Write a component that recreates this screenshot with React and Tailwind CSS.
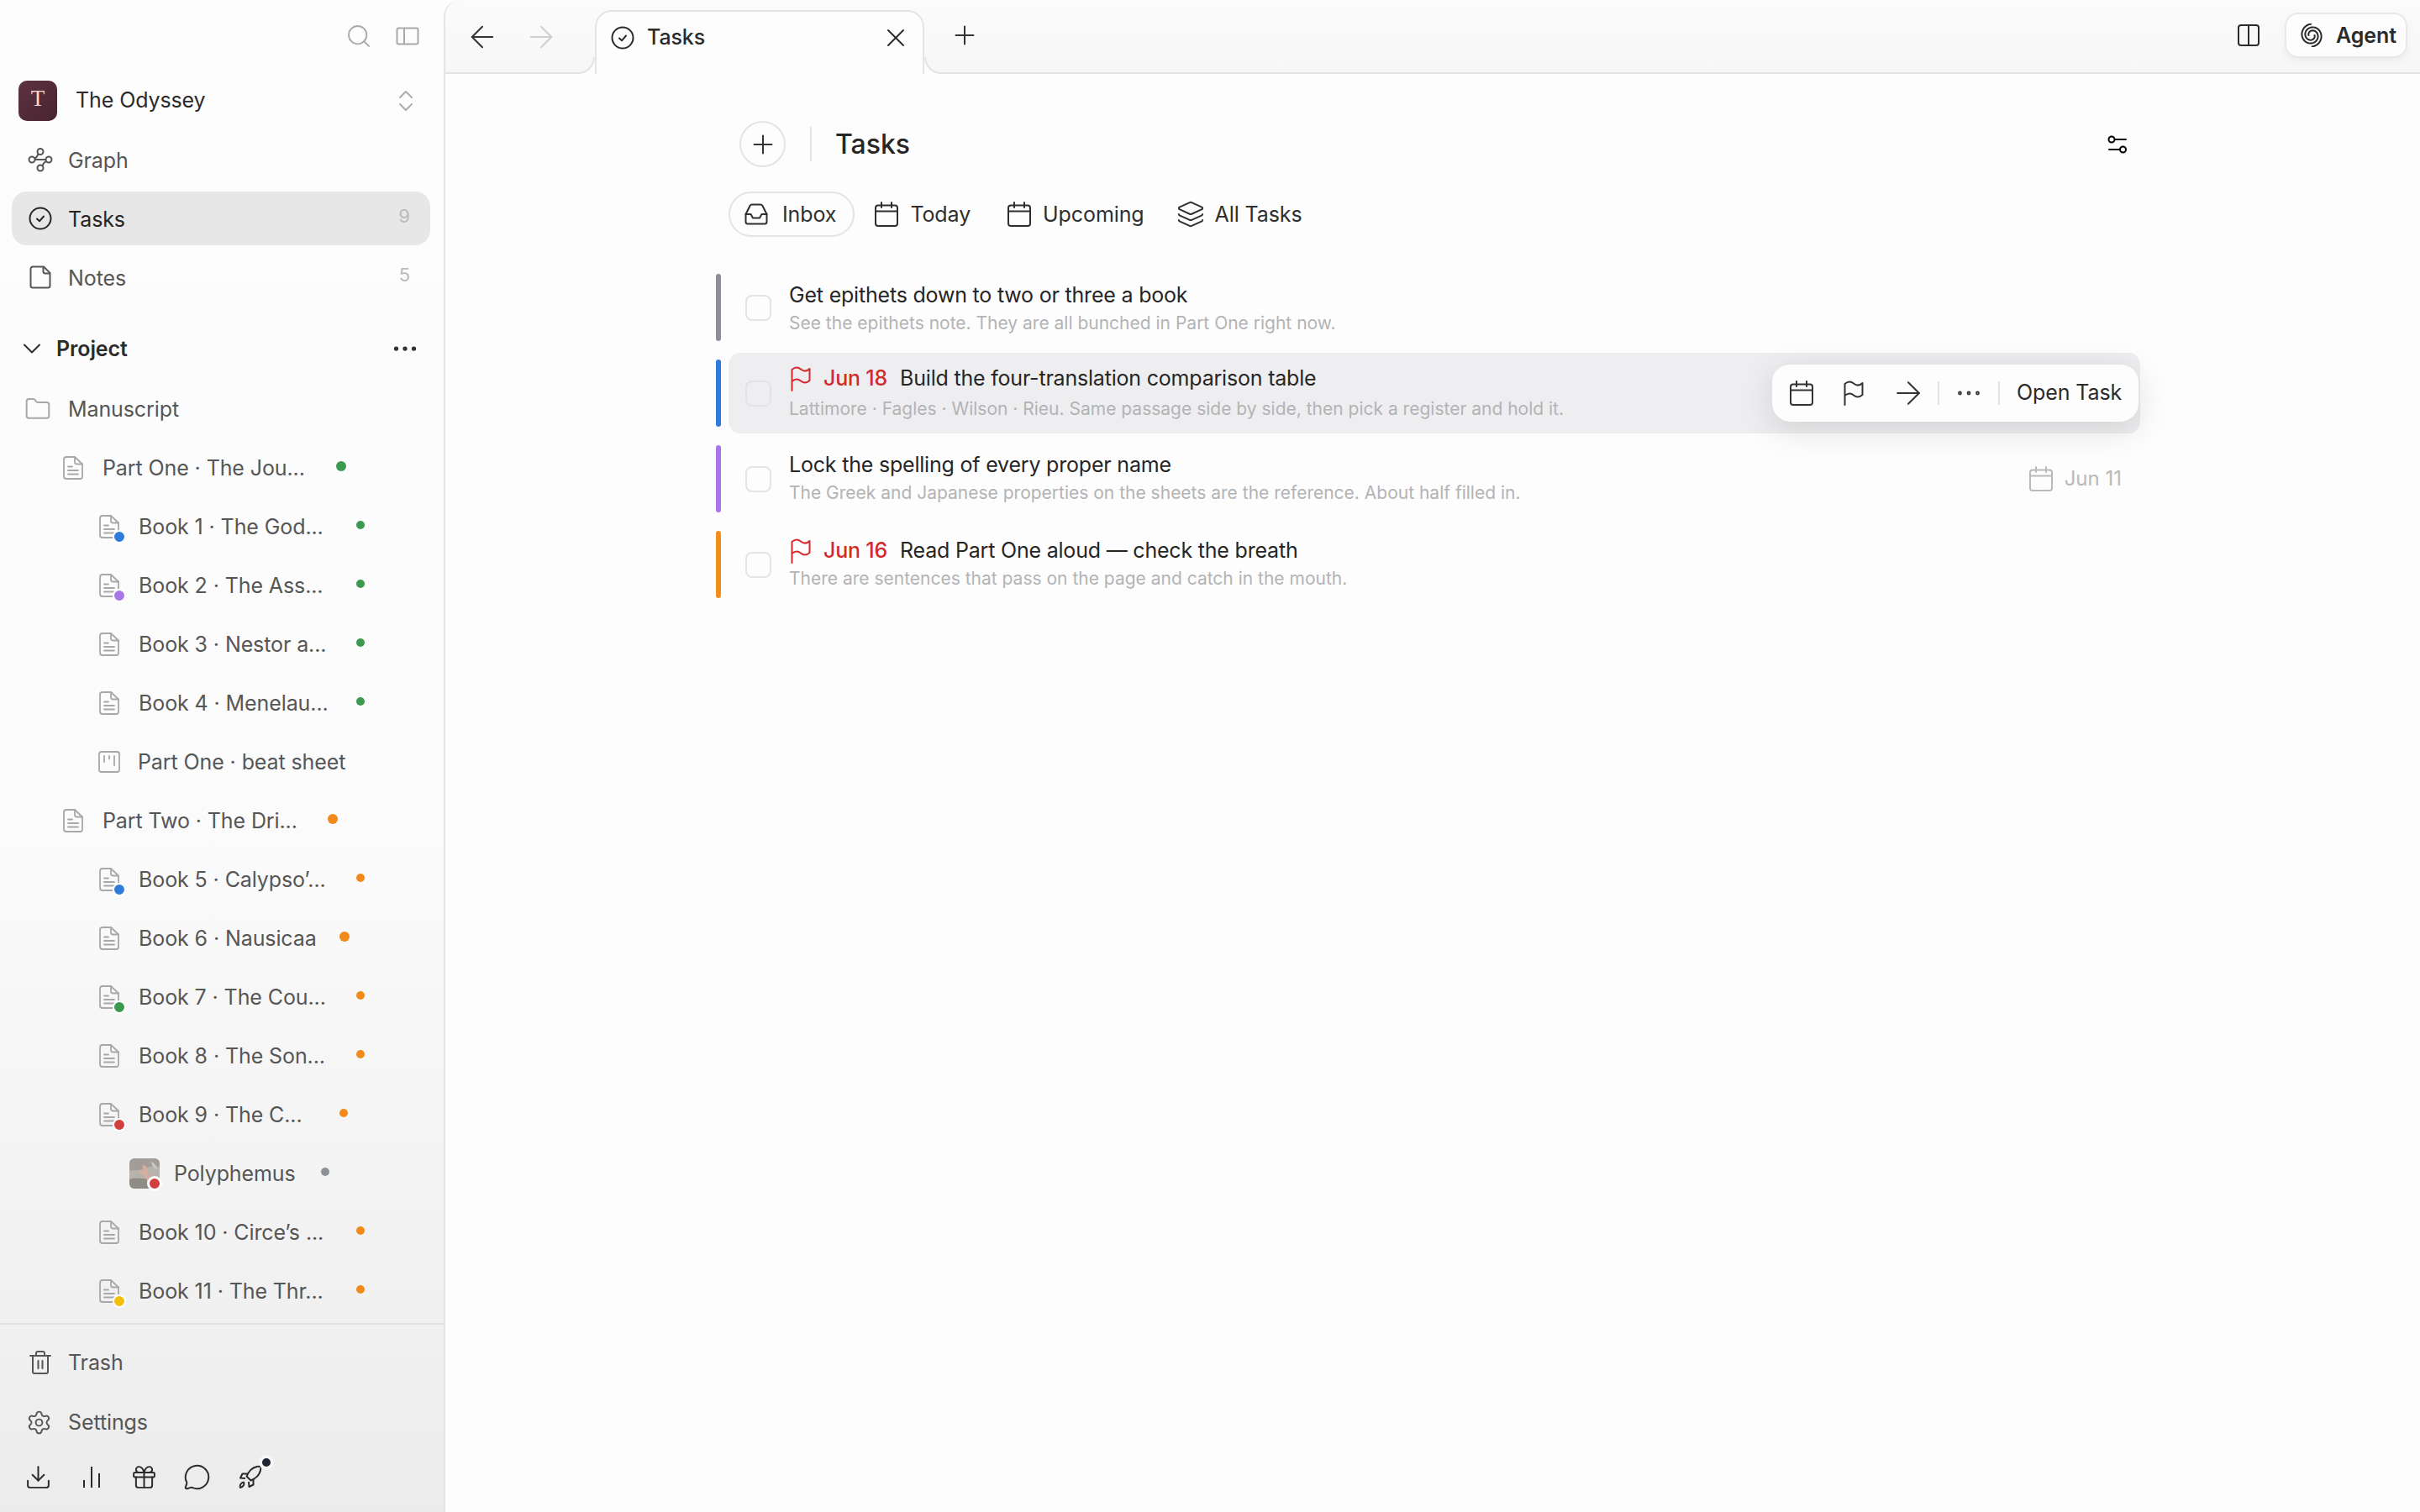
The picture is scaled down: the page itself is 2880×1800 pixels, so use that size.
import React from "react";
import {
  ArrowLeft,
  ArrowRight,
  ChevronDown,
  Download,
  Ellipsis,
  Folder,
  Gift,
  Layers,
  MessageCircle,
  Plus,
  Search,
  Settings,
  X,
} from "lucide-react";

const CheckCircle = ({ className }) => (
  <svg viewBox="0 0 28 28" fill="none" stroke="currentColor" strokeWidth="2" strokeLinecap="round" strokeLinejoin="round" className={className}>
    <circle cx="14" cy="14" r="12.5" />
    <path d="M10 14.5l3 2.8 5-5.8" />
  </svg>
);

const GraphIcon = () => (
  <svg viewBox="0 0 30 30" fill="none" stroke="currentColor" strokeWidth="2" className="w-[30px] h-[30px]">
    <circle cx="15" cy="5.5" r="3.5" />
    <circle cx="5" cy="15" r="3.5" />
    <circle cx="25" cy="15" r="3.5" />
    <circle cx="15" cy="25" r="3.5" />
    <path d="M8.5 15h13M12.5 8c-1 3.5-2.5 5-4.5 6M17.5 22.5c1-3 3-5 5-5.5" />
  </svg>
);

const NoteIcon = () => (
  <svg viewBox="0 0 26 28" fill="none" stroke="currentColor" strokeWidth="2" strokeLinejoin="round" className="w-[26px] h-[28px]">
    <path d="M3.5 1.5h13.5l7.5 7.5v15a2.5 2.5 0 0 1-2.5 2.5h-18a2.5 2.5 0 0 1-2.5-2.5v-20a2.5 2.5 0 0 1 2.5-2.5z" />
    <path d="M16.5 1.5v5.5a2.5 2.5 0 0 0 2.5 2.5h5.5" />
  </svg>
);

const DocIcon = () => (
  <svg viewBox="0 0 24 28" fill="none" stroke="#a8a8a8" strokeWidth="1.8" strokeLinecap="round" strokeLinejoin="round" className="w-[24px] h-[28px]">
    <path d="M4 1h10l9 8.5v15a2.5 2.5 0 0 1-2.5 2.5h-16.5a3 3 0 0 1-3-2.5v-21a3 3 0 0 1 3-2.5z" />
    <path d="M14 1v6a2.5 2.5 0 0 0 2.5 2.5h6.5" />
    <path d="M6 12.5h5M6 17h12M6 21.5h12" />
  </svg>
);

const BoardIcon = () => (
  <svg viewBox="0 0 26 26" fill="none" stroke="#a8a8a8" strokeWidth="1.8" strokeLinecap="round" className="w-[26px] h-[26px]">
    <rect x="1" y="1" width="24" height="24" rx="2.5" />
    <path d="M7 6v7M13 6v3.5M19 6v11" />
  </svg>
);

const spiralArm = (offset) =>
  Array.from({ length: 36 }, (_, i) => {
    const t = i / 35;
    const r = 3.5 + 10 * t;
    const a = offset + t * 7.8;
    return `${i === 0 ? "M" : "L"}${(14 + r * Math.cos(a)).toFixed(2)} ${(14 + r * Math.sin(a)).toFixed(2)}`;
  }).join(" ");

const Spiral = () => (
  <svg viewBox="0 0 28 28" fill="none" stroke="currentColor" strokeWidth="2" strokeLinecap="round" className="w-[28px] h-[28px]">
    <path d={spiralArm(0)} />
    <path d={spiralArm(3.14)} />
  </svg>
);

const FilterIcon = () => (
  <svg viewBox="0 0 24 24" fill="none" stroke="currentColor" strokeWidth="2" strokeLinecap="round" className="w-[24px] h-[24px]">
    <circle cx="5" cy="6" r="3.5" />
    <circle cx="18.5" cy="18" r="3.5" />
    <path d="M9 6h13M2 18h12.5" />
  </svg>
);

const PanelIcon = () => (
  <svg viewBox="0 0 28 22" fill="none" stroke="#aaaaaa" strokeWidth="2" className="w-[28px] h-[22px]">
    <rect x="1.5" y="1.5" width="25" height="19" rx="2" />
    <path d="M10 1.5v19" />
  </svg>
);

const SplitIcon = () => (
  <svg viewBox="0 0 26 26" fill="none" stroke="currentColor" strokeWidth="2" className="w-[26px] h-[26px]">
    <rect x="1" y="1" width="24" height="24" rx="3" />
    <path d="M13 1v24" />
  </svg>
);

const UpDown = () => (
  <svg viewBox="0 0 18 24" fill="none" stroke="#aaaaaa" strokeWidth="1.8" strokeLinecap="round" strokeLinejoin="round" className="w-[18px] h-[24px]">
    <path d="M2 8l7-7 7 7M2 16l7 7 7-7" />
  </svg>
);

const Trash = () => (
  <svg viewBox="0 0 26 28" fill="none" stroke="currentColor" strokeWidth="2" strokeLinecap="round" strokeLinejoin="round" className="w-[26px] h-[28px]">
    <path d="M1 6h24M4 6v19a2 2 0 0 0 2 2h14a2 2 0 0 0 2-2v-19M8 6v-3a2 2 0 0 1 2-2h6a2 2 0 0 1 2 2v3M10.5 12v9M15.5 12v9" />
  </svg>
);

const BarsIcon = () => (
  <svg viewBox="0 0 24 28" fill="none" stroke="currentColor" strokeWidth="2" className="w-[24px] h-[28px]">
    <path d="M3 18v9M12 2v25M21 10v17" />
  </svg>
);

const RocketIcon = () => (
  <svg viewBox="0 0 28 28" fill="none" stroke="currentColor" strokeWidth="2" strokeLinejoin="round" className="w-[28px] h-[28px]">
    <path d="M26.5 1.5c-6 0-12 3-15 8l-2 4 5 5 4-2c5-3 8-9 8-15z" />
    <path d="M10.5 10.5h-6l-2.5 5 6 .5M17.5 17.5v6l-5 2.5-.5-6" />
    <path d="M2 27c-1-3 1-6 4-6.500 1 2.500 0 5.500-4 6.500z" />
  </svg>
);

const CalendarIcon = () => (
  <svg viewBox="0 0 28 30" fill="none" stroke="currentColor" strokeWidth="2" strokeLinecap="round" className="w-[28px] h-[30px] shrink-0">
    <rect x="1" y="4.5" width="26" height="24.5" rx="3" />
    <path d="M1 11.5h26M8 1v6M20 1v6" />
  </svg>
);

const FlagIcon = ({ className }) => (
  <svg viewBox="0 0 24 30" fill="none" stroke="currentColor" strokeWidth="2" strokeLinecap="round" strokeLinejoin="round" className={`w-[24px] h-[30px] shrink-0 ${className}`}>
    <path d="M1.5 29v-25c3.500-3 7.500-3 10.500-.5s7 3 10.500-.5v14c-3.500 3-7.500 3-10.500.5s-7-2.500-10.500.5" />
  </svg>
);

const InboxIcon = () => (
  <svg viewBox="0 0 28 26" fill="none" stroke="currentColor" strokeWidth="2" strokeLinejoin="round" strokeLinecap="round" className="w-[28px] h-[26px]">
    <path d="M1.5 13l5-10a3 3 0 0 1 2.5-1.5h10a3 3 0 0 1 2.5 1.5l5 10v9a2.5 2.5 0 0 1-2.5 2.5h-20a2.5 2.5 0 0 1-2.5-2.5z" />
    <path d="M1.5 13h6l2.5 4.5h8l2.5-4.5h6" />
  </svg>
);

const RailColors = { gray: "bg-[#8e9099]", blue: "bg-[#2f7bdc]", purple: "bg-[#a876e6]", orange: "bg-[#f18f1e]" };

const NavItem = ({ icon, label, count, active }) => (
  <div className={`ml-[14px] w-[498px] h-[64px] mb-[6px] flex items-center rounded-[18px] pl-[19px] pr-[24px] ${active ? "bg-[#e7e7e7] text-[#262626]" : "text-[#565656]"}`}>
    <div className="w-[30px] flex justify-center">{icon}</div>
    <span className="ml-[18px] pt-[4px] flex-1 text-[25px] tracking-[-0.1px]">{label}</span>
    {count && <span className="text-[22px] text-[#bbbbbb] mb-[6px]">{count}</span>}
  </div>
);

const tree = [
  { label: "Part One · The Jou...", pl: "pl-[75px]", w: "w-[278px]", kind: "doc", dot: "bg-[#3a9a4f]", size: "w-[12px] h-[12px]" },
  { label: "Book 1 · The God...", pl: "pl-[118px]", w: "w-[259px]", kind: "doc", badge: "bg-[#2f7bdc]", dot: "bg-[#3a9a4f]" },
  { label: "Book 2 · The Ass...", pl: "pl-[118px]", w: "w-[259px]", kind: "doc", badge: "bg-[#a876e6]", dot: "bg-[#3a9a4f]" },
  { label: "Book 3 · Nestor a...", pl: "pl-[118px]", w: "w-[259px]", kind: "doc", dot: "bg-[#3a9a4f]" },
  { label: "Book 4 · Menelau...", pl: "pl-[118px]", w: "w-[259px]", kind: "doc", dot: "bg-[#3a9a4f]" },
  { label: "Part One · beat sheet", pl: "pl-[117px]", w: "w-[259px]", kind: "board" },
  { label: "Part Two · The Dri...", pl: "pl-[75px]", w: "w-[268px]", kind: "doc", dot: "bg-[#f18a1a]", size: "w-[12px] h-[12px]" },
  { label: "Book 5 · Calypso’...", pl: "pl-[118px]", w: "w-[259px]", kind: "doc", badge: "bg-[#2f7bdc]", dot: "bg-[#f18a1a]" },
  { label: "Book 6 · Nausicaa", pl: "pl-[118px]", w: "w-[239px]", kind: "doc", dot: "bg-[#f18a1a]", size: "w-[12px] h-[12px]" },
  { label: "Book 7 · The Cou...", pl: "pl-[118px]", w: "w-[259px]", kind: "doc", badge: "bg-[#3a9a4f]", dot: "bg-[#f18a1a]" },
  { label: "Book 8 · The Son...", pl: "pl-[118px]", w: "w-[259px]", kind: "doc", dot: "bg-[#f18a1a]" },
  { label: "Book 9 · The C...", pl: "pl-[118px]", w: "w-[239px]", kind: "doc", badge: "bg-[#d23f3f]", dot: "bg-[#f18a1a]" },
  { label: "Polyphemus", pl: "pl-[154px]", w: "w-[175px]", kind: "image", dot: "bg-[#8e9199]" },
  { label: "Book 10 · Circe’s ...", pl: "pl-[118px]", w: "w-[259px]", kind: "doc", dot: "bg-[#f18a1a]" },
  { label: "Book 11 · The Thr...", pl: "pl-[118px]", w: "w-[259px]", kind: "doc", badge: "bg-[#f3bf0c]", dot: "bg-[#f18a1a]" },
];

const Thumb = () => (
  <div className="relative w-[36px] h-[36px]">
    <svg viewBox="0 0 36 36" className="w-[36px] h-[36px] rounded-[6px]">
      <rect width="36" height="36" fill="#b7b2ab" />
      <path d="M0 0h36v10c-8-3-14 1-20 3-6 2-10 0-16 2z" fill="#a29e97" />
      <path d="M0 25c10-4 22 2 36-2v13h-36z" fill="#8f8c85" />
      <path d="M15 8l5 1 3 9 3 10-4 1-4-9-7-4 2-2 4 1z" fill="#d6ae9c" />
      <path d="M26 4c3 1 6 4 7 9-4-1-6-4-7-9z" fill="#cdc9c2" />
    </svg>
    <span className="absolute -right-[3px] -bottom-[3px] w-[18px] h-[18px] rounded-full bg-[#d23f3f] border-[3px] border-white" />
  </div>
);

const TreeRow = ({ item }) => (
  <div className={`h-[70px] flex items-center text-[25px] tracking-[-0.1px] text-[#565656] ${item.pl}`}>
    <div className="relative w-[26px] flex shrink-0">
      {item.kind === "doc" && <DocIcon />}
      {item.kind === "board" && <BoardIcon />}
      {item.kind === "image" && <Thumb />}
      {item.badge && <span className={`absolute -right-[6px] -bottom-[6px] w-[16px] h-[16px] rounded-full border-2 border-white ${item.badge}`} />}
    </div>
    <span className={`${item.kind === "image" ? "ml-[27px]" : "ml-[21px]"} pt-[1px] ${item.w} whitespace-nowrap`}>{item.label}</span>
    {item.dot && <span className={`rounded-full mb-[4px] ${item.size || "w-[10px] h-[10px]"} ${item.dot}`} />}
  </div>
);

const Sidebar = () => (
  <aside className="w-[528px] h-full shrink-0 flex flex-col bg-linear-to-b from-[#fdfdfd] via-[#fbfbfb] via-55% to-[#ececec]">
    <div className="h-[86px] flex items-center justify-end gap-[28px] pr-[29px]">
      <Search size={32} strokeWidth={1.4} className="text-[#aaaaaa]" />
      <PanelIcon />
    </div>
    <div className="h-[68px] mb-[4px] flex items-center pl-[22px] pr-[36px]">
      <div className="w-[46px] h-[48px] rounded-[10px] bg-linear-to-br from-[#5f3241] to-[#47242f] flex items-center justify-center text-[#f3d9dc] text-[27px] font-['Liberation_Serif',serif] pb-[6px]">T</div>
      <span className="ml-[22px] flex-1 text-[25px] tracking-[-0.1px] text-[#2b2b2b]">The Odyssey</span>
      <UpDown />
    </div>
    <NavItem icon={<GraphIcon />} label="Graph" />
    <NavItem icon={<CheckCircle className="w-[28px] h-[28px]" />} label="Tasks" count="9" active />
    <NavItem icon={<NoteIcon />} label="Notes" count="5" />
    <div className="mt-[15px] h-[64px] shrink-0 flex items-center pl-[20px] pr-[28px] text-[#2b2b2b]">
      <ChevronDown size={36} strokeWidth={1.3} />
      <span className="ml-[11px] pt-[2px] flex-1 text-[25px] font-semibold tracking-[-0.1px]">Project</span>
      <Ellipsis size={36} strokeWidth={1.5} />
    </div>
    <div className="mt-[5px] flex-1 overflow-hidden">
      <div className="h-[70px] flex items-center pl-[29px] text-[25px] tracking-[-0.1px] text-[#565656]">
        <Folder size={32} strokeWidth={1.5} className="text-[#a8a8a8]" />
        <span className="ml-[20px] pt-[1px]">Manuscript</span>
      </div>
      {tree.map((item) => (
        <TreeRow key={item.label} item={item} />
      ))}
    </div>
    <div className="border-t-2 border-[#e3e3e3] pt-[13px] pb-[10px]">
      <div className="h-[64px] mb-[7px] flex items-center pl-[35px] text-[#565656]">
        <Trash />
        <span className="ml-[20px] pt-[2px] text-[25px] tracking-[-0.1px]">Trash</span>
      </div>
      <div className="h-[64px] mb-[1px] flex items-center pl-[31px] text-[#565656]">
        <Settings size={31} strokeWidth={1.5} />
        <span className="ml-[19px] pt-[1px] text-[25px] tracking-[-0.1px]">Settings</span>
      </div>
      <div className="h-[64px] flex items-center pl-[14px] text-[#2b2b2b]">
        <div className="w-[63px] flex justify-center"><Download size={33} strokeWidth={1.45} /></div>
        <div className="w-[63px] flex justify-center"><BarsIcon /></div>
        <div className="w-[63px] flex justify-center"><Gift size={33} strokeWidth={1.45} /></div>
        <div className="w-[63px] flex justify-center"><MessageCircle size={33} strokeWidth={1.45} /></div>
        <div className="relative w-[63px] flex justify-center">
          <RocketIcon />
          <span className="absolute left-[42px] -top-[12px] w-[10px] h-[10px] rounded-full bg-[#1f2430] border-[4px] border-[#f6f6f6] box-content" />
        </div>
      </div>
    </div>
  </aside>
);

const TabBar = () => (
  <div className="relative h-[88px] shrink-0 flex items-end border-b-2 border-[#e4e4e4] bg-linear-to-b from-[#fbfbfb] to-[#f7f7f7] rounded-tl-[20px]">
    <div className="absolute left-[23px] top-[23px] flex gap-[28px] text-[#333333]">
      <ArrowLeft size={42} strokeWidth={1.15} />
      <ArrowRight size={42} strokeWidth={1.15} className="text-[#d0d0d0]" />
    </div>
    <div className="relative ml-[178px] -mb-[2px] z-10 w-[392px] h-[76px] pb-[12px] flex items-center bg-[#fdfdfd] border-2 border-b-0 border-[#e4e4e4] rounded-t-[20px] pl-[17px] pr-[14px] text-[#2b2b2b]">
      <span className="absolute -left-[22px] bottom-0 w-[20px] h-[20px] bg-[#fdfdfd]">
        <span className="block w-[20px] h-[20px] bg-[#f7f7f7] border-r-2 border-b-2 border-[#e4e4e4] rounded-br-[20px]" />
      </span>
      <span className="absolute -right-[22px] bottom-0 w-[20px] h-[20px] bg-[#fdfdfd]">
        <span className="block w-[20px] h-[20px] bg-[#f7f7f7] border-l-2 border-b-2 border-[#e4e4e4] rounded-bl-[20px]" />
      </span>
      <CheckCircle className="w-[28px] h-[28px]" />
      <span className="ml-[15px] flex-1 text-[25px] font-medium tracking-[-0.1px]">Tasks</span>
      <X size={36} strokeWidth={1.35} />
    </div>
    <div className="ml-[30px] h-[88px] flex items-center text-[#333333]">
      <Plus size={36} strokeWidth={1.35} />
    </div>
    <div className="ml-auto h-[88px] flex items-center pr-[15px] text-[#2b2b2b]">
      <SplitIcon />
      <div className="ml-[30px] w-[146px] h-[54px] rounded-[16px] bg-[#fdfdfd] border-2 border-[#e8e8e8] shadow-[0_4px_10px_rgba(0,0,0,0.05)] flex items-center pl-[16px]">
        <Spiral />
        <span className="ml-[15px] pt-[2px] text-[25px] font-semibold tracking-[-0.1px]">Agent</span>
      </div>
    </div>
  </div>
);

const tasks = [
  { rail: "gray", title: "Get epithets down to two or three a book", sub: "See the epithets note. They are all bunched in Part One right now.", nudge: "pt-[3px]" },
  { rail: "blue", flag: "Jun 18", title: "Build the four-translation comparison table", sub: "Lattimore · Fagles · Wilson · Rieu. Same passage side by side, then pick a register and hold it.", hover: true, tall: true },
  { rail: "purple", title: "Lock the spelling of every proper name", sub: "The Greek and Japanese properties on the sheets are the reference. About half filled in.", due: "Jun 11" },
  { rail: "orange", flag: "Jun 16", title: "Read Part One aloud — check the breath", sub: "There are sentences that pass on the page and catch in the mouth." },
];

const HoverBar = () => (
  <div className="absolute right-[2px] top-[12px] w-[436px] h-[70px] rounded-[22px] bg-[#fdfdfd] border-t-2 border-[#e6e6e6] shadow-[0_10px_40px_rgba(0,0,0,0.12)] flex items-center text-[#333333]">
    <div className="ml-[21px] flex"><CalendarIcon /></div>
    <FlagIcon className="ml-[36px]" />
    <ArrowRight size={44} strokeWidth={1.1} className="ml-[31px]" />
    <span className="ml-[13px] w-[2px] h-[28px] bg-[#e2e2e2]" />
    <Ellipsis size={36} strokeWidth={1.2} className="ml-[17px]" />
    <span className="ml-[17px] w-[2px] h-[28px] bg-[#e2e2e2]" />
    <span className="ml-[20px] text-[25px] tracking-[-0.1px] text-[#2b2b2b] whitespace-nowrap">Open Task</span>
  </div>
);

const TaskRow = ({ task }) => (
  <div className="flex items-center h-[96px] mb-[6px] -ml-[15px]">
    <div className={`w-[6px] h-[80px] rounded-full ${RailColors[task.rail]}`} />
    <div className={`relative ml-[9px] flex-1 h-[96px] flex items-center rounded-[14px] pl-[20px] pr-[22px] ${task.hover ? "bg-[#eeeef0]" : ""}`}>
      <div className={`w-[31px] h-[31px] rounded-[8px] border-2 ${task.hover ? "border-[#e3e3e5]" : "border-[#e4e4e4]"}`} />
      <div className={`ml-[21px] flex-1 ${task.nudge || ""}`}>
        <div className={`flex items-center ${task.tall ? "h-[38px] pb-[2px]" : "h-[34px]"} text-[25px] tracking-[-0.2px] text-[#262626]`}>
          {task.flag && (
            <>
              <FlagIcon className="text-[#d4292f] ml-[2px]" />
              <span className="ml-[15px] font-medium text-[#d12b2b]">{task.flag}</span>
              <span className="ml-[15px]">{task.title}</span>
            </>
          )}
          {!task.flag && task.title}
        </div>
        <div className="h-[32px] flex items-center text-[21px] text-[#b3b3b6]">{task.sub}</div>
      </div>
      {task.due && (
        <div className="flex items-center text-[24px] text-[#b9b9b9]">
          <CalendarIcon />
          <span className="ml-[14px]">{task.due}</span>
        </div>
      )}
      {task.hover && <HoverBar />}
    </div>
  </div>
);

const Main = () => (
  <main className="flex-1 h-full flex flex-col border-l-2 border-[#e4e4e4] rounded-tl-[20px] bg-[#fdfdfd]">
    <TabBar />
    <div className="ml-[337px] w-[1680px]">
      <div className="mt-[56px] h-[55px] flex items-center pl-[13px] pr-[15px]">
        <div className="w-[55px] h-[55px] rounded-full border-2 border-[#e4e4e4] flex items-center justify-center text-[#333333]">
          <Plus size={36} strokeWidth={1.35} />
        </div>
        <span className="ml-[29px] w-[2px] h-[41px] bg-[#e4e4e4]" />
        <span className="ml-[28px] flex-1 text-[32px] font-medium text-[#262626]">Tasks</span>
        <FilterIcon />
      </div>
      <div className="mt-[29px] flex items-center text-[25px] tracking-[-0.1px] text-[#2f2f2f]">
        <div className="h-[54px] flex items-center rounded-full border-2 border-[#e4e4e4] pl-[17px] pr-[20px] mr-[24px]">
          <InboxIcon />
          <span className="ml-[17px] pt-[2px]">Inbox</span>
        </div>
        <div className="h-[54px] flex items-center mr-[44px]">
          <CalendarIcon />
          <span className="ml-[14px] pt-[2px]">Today</span>
        </div>
        <div className="h-[54px] flex items-center mr-[38px]">
          <CalendarIcon />
          <span className="ml-[14px] pt-[2px]">Upcoming</span>
        </div>
        <div className="h-[54px] flex items-center">
          <Layers size={34} strokeWidth={1.4} />
          <span className="ml-[12px] pt-[2px]">All Tasks</span>
        </div>
      </div>
      <div className="mt-[36px]">
        {tasks.map((task) => (
          <TaskRow key={task.title} task={task} />
        ))}
      </div>
    </div>
  </main>
);

export default function App() {
  return (
    <div className="flex w-screen h-screen overflow-hidden font-['Inter',sans-serif] bg-[#fdfdfd]">
      <Sidebar />
      <Main />
    </div>
  );
}
